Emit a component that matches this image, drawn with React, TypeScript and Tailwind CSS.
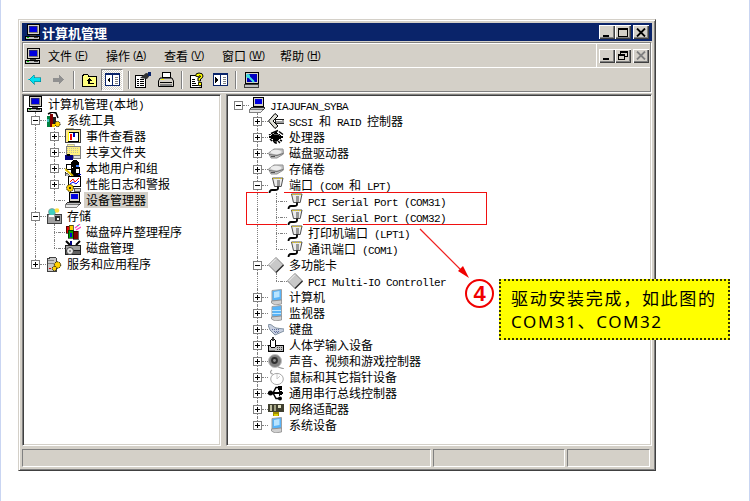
import React from "react";

const S = ({ children, w = 16, h = 16, vb = "0 0 16 16" }: { children: React.ReactNode; w?: number; h?: number; vb?: string }) => (
  <svg width={w} height={h} viewBox={vb} shapeRendering="crispEdges" className="block shrink-0">{children}</svg>
);

const Computer = () => (
  <S>
    <rect x="2" y="0.5" width="12" height="10" fill="#d4d0c8" stroke="#000" />
    <rect x="4" y="2" width="8" height="6" fill="#0000e0" stroke="#404040" strokeWidth="0.6" />
    <rect x="5" y="11" width="6" height="1" fill="#404040" />
    <rect x="0.5" y="12.5" width="14" height="2.5" fill="#c0c0c0" stroke="#000" />
    <rect x="2" y="13" width="2" height="1" fill="#00c000" />
    <rect x="9" y="13" width="4" height="1" fill="#404040" />
  </S>
);
const Tools = () => (
  <S>
    <rect x="1" y="4" width="3" height="11" fill="#008040" />
    <rect x="4" y="2" width="3" height="13" fill="#800000" />
    <rect x="7" y="5" width="3" height="9" fill="#202020" />
    <path d="M2 2 L6 0 L10 1 L12 6" stroke="#000" strokeWidth="1.5" fill="none" shapeRendering="auto" />
    <rect x="1" y="7" width="2" height="3" fill="#40c0c0" />
    <circle cx="11.5" cy="12" r="2.6" fill="#ffd000" stroke="#000" strokeWidth="1" strokeDasharray="1.2 .8" shapeRendering="auto" />
    <rect x="6" y="12" width="3" height="3" fill="#ffd000" />
  </S>
);
const EventV = () => (
  <S>
    <rect x="1" y="0" width="7" height="2" fill="#ffe890" stroke="#808080" strokeWidth=".5" />
    <rect x="0.5" y="1.5" width="15" height="13" fill="#ffe890" stroke="#404040" />
    <rect x="3" y="4" width="10" height="9" fill="#fff" stroke="#000" />
    <rect x="5" y="6" width="2" height="6" fill="#ff0000" />
    <rect x="8" y="5" width="2" height="4" fill="#0000c0" />
    <rect x="3" y="4" width="1" height="9" fill="#ffff00" />
  </S>
);
const Shared = () => (
  <S>
    <rect x="2" y="0" width="7" height="2" fill="#fff8a0" stroke="#808080" strokeWidth=".5" />
    <rect x="1" y="2" width="14" height="9" fill="#fff080" stroke="#808080" />
    <path d="M2 4h12M2 6h12M2 8h12" stroke="#c0c0a0" strokeDasharray="1 1" />
    <rect x="8" y="11" width="7" height="3" fill="#e0e0e0" stroke="#808080" />
    <rect x="0" y="11" width="8" height="5" fill="#000080" />
    <rect x="2" y="10" width="3" height="2" fill="#000" />
  </S>
);
const Users = () => (
  <S>
    <circle cx="10" cy="4" r="4" fill="#000" />
    <path d="M6 8 L15 7 V16 H6 Z" fill="#000" />
    <rect x="11" y="9" width="3" height="4" fill="#fff" />
    <rect x="11" y="5" width="3" height="2" fill="#4080ff" />
    <circle cx="4" cy="7" r="3" fill="#fff" stroke="#000" />
    <path d="M0 9 L8 16" stroke="#e0c000" strokeWidth="2" shapeRendering="auto" />
    <path d="M0 12 L5 16 H0 Z" fill="#c0c0c0" stroke="#000" strokeWidth=".6" />
    <rect x="13" y="14" width="3" height="1" fill="#0000c0" />
  </S>
);
const Perf = () => (
  <S>
    <rect x="3.5" y="0.5" width="12" height="10" fill="#fff" stroke="#000" />
    <path d="M5 6 L8 3 L10 6 L14 2" stroke="#ff0000" fill="none" shapeRendering="auto" />
    <path d="M5 8 L8 6 L11 8 L14 5" stroke="#0000ff" fill="none" shapeRendering="auto" />
    <circle cx="5" cy="12" r="3.4" fill="#ffd000" stroke="#000" strokeDasharray="1.2 .8" shapeRendering="auto" />
    <rect x="9" y="12" width="6" height="3" fill="#d4d0c8" stroke="#000" strokeWidth=".6" />
    <circle cx="5" cy="12" r="1" fill="#000" shapeRendering="auto" />
  </S>
);
const DevMgr = () => (
  <S>
    <rect x="4.5" y="0.5" width="10" height="9" fill="#d4d0c8" stroke="#000" />
    <rect x="6" y="2" width="7" height="5" fill="#0000e0" />
    <path d="M3 10 H15 L15 12 H1 Z" fill="#c0c0c0" stroke="#000" strokeWidth=".8" />
    <path d="M1 12 H14 L12 15 H0 Z" fill="#e8e8e8" stroke="#606060" strokeWidth=".8" />
  </S>
);
const Storage = () => (
  <S>
    <rect x="1" y="6" width="14" height="9" fill="#a0a0a0" stroke="#404040" />
    <rect x="9" y="8" width="5" height="5" fill="#303030" />
    <circle cx="6" cy="4" r="3.5" fill="#40d0c0" stroke="#808080" strokeWidth=".6" shapeRendering="auto" />
    <circle cx="11" cy="2.5" r="2.3" fill="#ffe040" shapeRendering="auto" />
    <rect x="3" y="7" width="5" height="2" fill="#fff" />
    <rect x="11" y="10" width="2" height="2" fill="#fff" />
  </S>
);
const Defrag = () => (
  <S>
    <rect x="1" y="2" width="4" height="7" fill="#e00000" stroke="#000" strokeWidth=".6" />
    <rect x="4" y="1" width="4" height="5" fill="#ffd000" stroke="#000" strokeWidth=".6" />
    <rect x="3" y="6" width="5" height="8" fill="#00a000" stroke="#000" strokeWidth=".6" />
    <rect x="8" y="7" width="5" height="8" fill="#800000" stroke="#000" strokeWidth=".6" />
    <rect x="5" y="9" width="2" height="4" fill="#0000e0" />
    <path d="M10 4 L15 0 M11 6 L16 3" stroke="#ff40c0" strokeWidth="1.2" shapeRendering="auto" />
    <path d="M12 2 L14 1" stroke="#40c0a0" strokeWidth="1.2" />
  </S>
);
const DiskM = () => (
  <S>
    <path d="M1 1 L5 5 M15 1 L11 5" stroke="#000" strokeWidth="2" shapeRendering="auto" />
    <rect x="5" y="1" width="2" height="4" fill="#000080" />
    <rect x="0.5" y="5.5" width="15" height="5" fill="#a0a0a0" stroke="#202020" />
    <rect x="0.5" y="10.5" width="15" height="4" fill="#606060" stroke="#202020" />
    <circle cx="5" cy="11" r="3.5" fill="#e8e8e8" stroke="#404040" shapeRendering="auto" />
    <circle cx="5" cy="11" r="1" fill="#808080" shapeRendering="auto" />
  </S>
);
const Services = () => (
  <S>
    <path d="M1 3 L6 1 L10 2 V15 H1 Z" fill="#c8c8c8" stroke="#404040" />
    <rect x="2" y="4" width="6" height="1" fill="#808080" />
    <rect x="2" y="7" width="6" height="1" fill="#808080" />
    <rect x="3" y="12" width="2" height="1" fill="#e00000" />
    <circle cx="11.5" cy="9" r="3.2" fill="#ffd000" stroke="#000" strokeDasharray="1.2 .8" shapeRendering="auto" />
    <circle cx="8.5" cy="12.5" r="2.2" fill="#ffd000" stroke="#000" strokeDasharray="1 .7" shapeRendering="auto" />
  </S>
);
const Scsi = () => (
  <S>
    <path d="M7 0.5 L0.5 8 L7 15.5 L10 13 L5 8 L10 3 Z" fill="#e0e0d8" stroke="#000" shapeRendering="auto" />
    <rect x="7" y="6" width="9" height="4" fill="#a0a0a0" stroke="#000" strokeWidth=".8" />
    <rect x="8" y="7" width="6" height="1" fill="#fff" />
  </S>
);
const Chip = () => (
  <S>
    <path d="M0.5 8 L8 3 L15.5 8 L8 12.5 Z" fill="#000" />
    <path d="M3 4.5 L10 1.5 M1 6 L5 3.5 M11 2.5 L15 5.5 M2 10 L4 12 M5 11 L7 14 M8 12 V15 M10 12 L12 14 M12 11 L14 12" stroke="#000" strokeWidth="1.4" shapeRendering="auto" />
    <path d="M6 6 L10 5 L12 7" stroke="#606060" fill="none" />
  </S>
);
const Disk = () => (
  <S>
    <path d="M0.5 8 L6 4 H15 L15.5 9 L9 13 H3 Z" fill="#c4c4c4" stroke="#909090" shapeRendering="auto" />
    <ellipse cx="8" cy="7" rx="5.5" ry="2.2" fill="#ececec" shapeRendering="auto" />
    <path d="M1 9.5 L9 10.5 L15 8.5" stroke="#707070" fill="none" shapeRendering="auto" />
    <rect x="3" y="11" width="4" height="1" fill="#505050" />
  </S>
);
const Port = () => (
  <S>
    <path d="M4.5 1 H15 L13.2 9.5 H6.5 Z" fill="#ececec" stroke="#505050" shapeRendering="auto" />
    <path d="M5 1 H15" stroke="#e8c800" strokeDasharray="1 1" />
    <rect x="9" y="3" width="3" height="6" fill="#989898" />
    <path d="M10 9.5 V11.5 Q10 13 7 13 H4 Q1.5 13 1.5 16" stroke="#000" strokeWidth="1.8" fill="none" shapeRendering="auto" />
  </S>
);
const Diamond = () => (
  <S>
    <path d="M8 0.5 L15.5 8 L8 15.5 L0.5 8 Z" fill="#c8c8c8" stroke="#808080" shapeRendering="auto" />
    <path d="M8 15.5 L15.5 8" stroke="#303030" strokeWidth="1.4" shapeRendering="auto" />
    <path d="M8 1.5 L1.5 8" stroke="#fff" shapeRendering="auto" />
  </S>
);
const PcBlue = () => (
  <S>
    <path d="M4 1.5 L13.5 0.5 V11 L4 12 Z" fill="#58b4f8" stroke="#a0a0a0" shapeRendering="auto" />
    <path d="M6 3 L11.5 2 V8 L6 9 Z" fill="#b8e4ff" shapeRendering="auto" />
    <path d="M3.5 12 L13.5 11 V15 L7 16 L3.5 14 Z" fill="#d0d0d0" stroke="#808080" strokeWidth=".7" shapeRendering="auto" />
  </S>
);
const Mon = () => (
  <S>
    <path d="M4 1.5 L13.5 0.5 V11 L4 12 Z" fill="#58b4f8" stroke="#a0a0a0" shapeRendering="auto" />
    <path d="M4 5 H13 M4 8 H13" stroke="#c0e8ff" />
    <path d="M3.5 12 L13.5 11 V15 L7 16 L3.5 14 Z" fill="#d0d0d0" stroke="#808080" strokeWidth=".7" shapeRendering="auto" />
  </S>
);
const Keyboard = () => (
  <S>
    <path d="M0 4 C3 2 5 6 8 7 L16 8 V10 L7 14 L2 9 Z" fill="#c8d0e0" stroke="#8090a0" shapeRendering="auto" />
    <path d="M4 8 L12 9 M6 10 L12 10 M7 12 L11 11" stroke="#6070a0" strokeDasharray="1 1" />
  </S>
);
const Hid = () => (
  <S>
    <rect x="0.5" y="8.5" width="15" height="6" fill="#c0c0c0" stroke="#000" />
    <path d="M9 10h5M9 12h5" stroke="#404040" strokeDasharray="1 1" />
    <rect x="2.5" y="2.5" width="5" height="8" rx="2" fill="#fff" stroke="#000" />
    <rect x="4" y="0" width="2" height="4" fill="#404040" />
    <rect x="1" y="13" width="6" height="1" fill="#808080" />
  </S>
);
const Speaker = () => (
  <S>
    <circle cx="7" cy="8" r="6.5" fill="#808080" stroke="#c0c0c0" shapeRendering="auto" />
    <circle cx="6.5" cy="7.5" r="3.4" fill="#303030" shapeRendering="auto" />
    <circle cx="6.5" cy="7.5" r="1.4" fill="#909090" shapeRendering="auto" />
    <path d="M10 14 L16 16" stroke="#a0a0a0" strokeWidth="1.2" shapeRendering="auto" />
  </S>
);
const Mouse = () => (
  <S>
    <ellipse cx="9" cy="10" rx="6.3" ry="5.6" fill="#fff" stroke="#a8a8a8" shapeRendering="auto" />
    <path d="M4 1 C1 3 3 5 5 5" stroke="#a0a0a0" fill="none" strokeWidth="1.2" shapeRendering="auto" />
    <path d="M9 5 V10 L12 7" stroke="#c8c8c8" fill="none" shapeRendering="auto" />
  </S>
);
const Usb = () => (
  <S>
    <path d="M0 8 H14" stroke="#000" strokeWidth="2" />
    <path d="M11 4.5 L16 8 L11 11.5 Z" fill="#000" />
    <circle cx="2.5" cy="8" r="2.5" fill="#000" shapeRendering="auto" />
    <path d="M5 8 L8 2.5 H11 M5 8 L8 13.5 H11" stroke="#000" strokeWidth="1.5" fill="none" shapeRendering="auto" />
    <rect x="10" y="0.5" width="4" height="4" fill="#000" />
    <circle cx="12" cy="13.5" r="2" fill="#000" shapeRendering="auto" />
  </S>
);
const Nic = () => (
  <S>
    <rect x="0" y="3" width="16" height="8" fill="#404030" />
    <rect x="2" y="4" width="2" height="6" fill="#c0c0a0" />
    <rect x="6" y="4" width="2" height="6" fill="#a0a080" />
    <rect x="10" y="4" width="3" height="3" fill="#e0e0c0" />
    <rect x="5" y="11" width="6" height="4" fill="#a09000" />
    <rect x="6" y="13" width="4" height="2" fill="#e0d000" />
  </S>
);

const Back = ({ c }: { c: string }) => (
  <S w={13} h={11} vb="0 0 13 11"><path d="M0.5 5.5 L6 0.5 V3.5 H12.5 V7.5 H6 V10.5 Z" fill={c} stroke={c === "#00e0f0" ? "#008090" : "#909090"} strokeWidth=".6" /></S>
);
const Fwd = () => (
  <S w={13} h={11} vb="0 0 13 11"><path d="M12.5 5.5 L7 0.5 V3.5 H0.5 V7.5 H7 V10.5 Z" fill="#909090" /></S>
);
const Sep = () => <div className="w-[2px] h-[18px] ml-[7px] border-l border-l-[#808080] border-r border-r-white shrink-0" />;
const Folder = () => (
  <S w={15} h={14} vb="0 0 15 14">
    <path d="M0.5 3.5 V13.5 H14.5 V3.5 H7 L5.5 1 H2 L0.5 3.5 Z" fill="#ffff80" stroke="#000" />
    <path d="M7 5 L4 8 H6 V11 H12 V10 H8 V8 H10 Z" fill="#000" />
  </S>
);
const Pane = ({ flip }: { flip?: boolean }) => (
  <S w={15} h={13} vb="0 0 15 13">
    <rect x="0.5" y="0.5" width="14" height="12" fill="#fff" stroke="#0a246a" />
    <rect x="0" y="0" width="15" height="2" fill="#0a246a" />
    <rect x="7" y="0" width="1" height="13" fill="#0a246a" />
    {flip ? <path d="M5 4 V10 L2 7 Z" fill="#000" transform="matrix(-1 0 0 1 7 0)" /> : <path d="M5 4 V10 L2 7 Z" fill="#000" />}
    <path d="M10 4h3M10 6h3M10 8h3M10 10h3" stroke="#808080" />
  </S>
);
const Props = () => (
  <S>
    <path d="M0.5 3.5 H10.5 V15.5 H0.5 Z" fill="#fff" stroke="#000" />
    <path d="M2 7h2M5 7h4M2 9h2M5 9h4M2 11h2M5 11h4M2 13h2M5 13h4" stroke="#000" />
    <path d="M5 6 L11 1 L16 2 L12 7 Z" fill="#303030" shapeRendering="auto" />
    <rect x="13" y="0" width="3" height="4" fill="#0a246a" />
  </S>
);
const Printer = () => (
  <S>
    <path d="M4.5 0.5 H12.5 V5.5 H4.5 Z" fill="#fff" stroke="#000" />
    <path d="M2 6 H14 L15.5 9 V14.5 H0.5 V9 Z" fill="#d4d0c8" stroke="#000" shapeRendering="auto" />
    <rect x="2" y="10" width="12" height="1" fill="#000" />
    <rect x="2" y="12" width="12" height="2" fill="#808080" />
    <rect x="3" y="7" width="3" height="1" fill="#ffff00" />
  </S>
);
const Help = () => (
  <S w={14} h={16} vb="0 0 14 16">
    <path d="M0.5 3.5 H5 V15.5 H11.5 V12 V15.5 H0.5 Z" fill="#fff" stroke="#000" />
    <rect x="1" y="4" width="8" height="11" fill="#fff" />
    <path d="M2 7h3M2 9h3M2 11h4M2 13h6" stroke="#000" />
    <path d="M5.5 4 Q5.5 1 9 1 Q13 1 13 4 Q13 6 10.5 7 V9 H8 V6 Q10.5 5.5 10.5 4 Q9 3 8.5 5 Z" fill="#ffff00" stroke="#000" shapeRendering="auto" />
    <rect x="8" y="10" width="3" height="3" fill="#ffff00" stroke="#000" strokeWidth=".8" />
  </S>
);
const Mmc = () => (
  <S w={15} h={16} vb="0 0 15 16">
    <rect x="1.5" y="0.5" width="13" height="11" fill="#d4d0c8" stroke="#000" />
    <rect x="3" y="2" width="10" height="8" fill="#0000c0" />
    <path d="M3 3 L10 10" stroke="#40e0e0" strokeWidth="2" shapeRendering="auto" />
    <circle cx="4" cy="4" r="2" fill="#40e0e0" shapeRendering="auto" />
    <rect x="0.5" y="12.5" width="14" height="3" fill="#c0c0c0" stroke="#404040" />
  </S>
);

const WinBtn = ({ children, className = "" }: { children: React.ReactNode; className?: string }) => (
  <div className={`w-[16px] h-[14px] bg-[#d4d0c8] shadow-[inset_1px_1px_0_#fff,inset_-1px_-1px_0_#404040,inset_-2px_-2px_0_#808080] flex items-center justify-center shrink-0 ${className}`}>
    {children}
  </div>
);
const GMin = () => (
  <S w={10} h={9} vb="0 0 10 9"><rect x="1" y="7" width="6" height="2" fill="#000" /></S>
);
const GMax = () => (
  <S w={10} h={9} vb="0 0 10 9"><rect x="0.5" y="0.5" width="9" height="8" fill="none" stroke="#000" /><rect x="0" y="0" width="10" height="2" fill="#000" /></S>
);
const GClose = ({ c = "#000" }: { c?: string }) => (
  <svg width={10} height={9} viewBox="0 0 10 9" className="block"><path d="M1 0.5 L9 8.5 M9 0.5 L1 8.5" stroke={c} strokeWidth="1.8" /></svg>
);
const GRestore = () => (
  <S w={10} h={9} vb="0 0 10 9">
    <rect x="2.5" y="0.5" width="7" height="5" fill="none" stroke="#000" />
    <rect x="2" y="0" width="8" height="2" fill="#000" />
    <rect x="0.5" y="3.5" width="6" height="5" fill="#d4d0c8" stroke="#000" />
    <rect x="0" y="3" width="7" height="2" fill="#000" />
  </S>
);

const Label = ({ text }: { text: string }) => (
  <>
    {text.split(/([\x20-\x7e]+)/).filter(Boolean).map((p, i) =>
      /^[\x20-\x7e]+$/.test(p) ? (
        <span key={i} className="font-['Liberation_Mono',monospace] text-[11px] tracking-[-0.6px] whitespace-pre">{p}</span>
      ) : (
        <span key={i}>{p}</span>
      )
    )}
  </>
);

const Box = ({ open }: { open?: boolean }) => (
  <div className="relative z-10 w-[9px] h-[9px] border border-[#808080] bg-white shrink-0 flex items-center justify-center">
    <svg width="7" height="7" viewBox="0 0 7 7" shapeRendering="crispEdges" className="block">
      <rect x="1" y="3" width="5" height="1" fill="#000" />
      {!open && <rect x="3" y="1" width="1" height="5" fill="#000" />}
    </svg>
  </div>
);

const V = ({ c }: { c: string }) => <div className={`absolute border-l border-dotted border-[#808080] ${c}`} />;

type RowP = {
  indent?: string;
  box?: "open" | "closed" | "none" | "root";
  icon: React.ReactNode;
  text: string;
  guides?: string[];
  selected?: boolean;
};

const Row = ({ indent = "", box = "none", icon, text, guides = [], selected }: RowP) => (
  <div className={`relative h-4 flex items-center whitespace-nowrap ${indent}`}>
    {guides.map((g, i) => <V key={i} c={g} />)}
    {box !== "root" && (
      <>
        {box === "none" ? (
          <div className="w-[9px] flex justify-end shrink-0"><div className="w-[5px] border-t border-dotted border-[#808080]" /></div>
        ) : (
          <Box open={box === "open"} />
        )}
        <div className="w-[6px] border-t border-dotted border-[#808080] shrink-0" />
      </>
    )}
    <div className="relative z-10 bg-white shrink-0">{icon}</div>
    <div className={`ml-[3px] px-[2px] h-4 leading-[15px] ${selected ? "bg-[#d4d0c8]" : ""}`}><Label text={text} /></div>
  </div>
);

const L1 = "left-[11px] top-0 h-4";
const L1e = "left-[11px] top-0 h-2";
const L2 = "left-[30px] top-0 h-4";
const L2e = "left-[30px] top-0 h-2";
const L2s = "left-[30px] top-2 h-2";

const R1 = "left-[29px] top-0 h-4";
const R1e = "left-[29px] top-0 h-2";
const R2 = "left-[48px] top-0 h-4";
const R2e = "left-[48px] top-0 h-2";
const R2s = "left-[48px] top-2 h-2";

const Sunken = ({ className, children }: { className: string; children: React.ReactNode }) => (
  <div className={`bg-white border-t border-l border-t-[#808080] border-l-[#808080] border-b border-r border-b-white border-r-white shadow-[inset_1px_1px_0_#404040,inset_-1px_-1px_0_#d4d0c8] overflow-hidden ${className}`}>
    {children}
  </div>
);

const Menu = ({ a, k, b = ")" }: { a: string; k: string; b?: string }) => (
  <div className="w-[58px] shrink-0 whitespace-nowrap text-[12px] flex items-center">
    <span>{a}</span>
    <span className="ml-[3px] font-['Liberation_Sans',sans-serif] text-[10px]">(<span className="underline">{k}</span>{b}</span>
  </div>
);

const Status = ({ className }: { className: string }) => (
  <div className={`h-[18px] border-t border-l border-t-[#808080] border-l-[#808080] border-b border-r border-b-white border-r-white ${className}`} />
);

export default function App() {
  return (
    <div className="relative w-[750px] h-[501px] bg-white border-x border-x-[#c9d5f2] pl-[17px] pt-[19px] overflow-hidden text-black text-[12px] font-['Noto_Sans_CJK_SC','Liberation_Sans',sans-serif]">
      {/* window */}
      <div className="w-[638px] h-[452px] bg-[#d4d0c8] border border-t-[#d4d0c8] border-l-[#d4d0c8] border-r-[#404040] border-b-[#404040] shadow-[inset_1px_1px_0_#fff,inset_-1px_-1px_0_#808080] p-[3px] flex flex-col">
        {/* title */}
        <div className="h-[18px] bg-[#0a246a] flex items-center pl-[3px] pr-[3px] shrink-0">
          <Computer />
          <span className="ml-px text-white font-bold text-[13px] leading-[17px]">计算机管理</span>
          <div className="ml-auto flex items-center">
            <WinBtn><GMin /></WinBtn>
            <WinBtn><GMax /></WinBtn>
            <WinBtn className="ml-[2px]"><GClose /></WinBtn>
          </div>
        </div>
        {/* rebar */}
        <div className="mt-px mr-px h-[50px] shrink-0 border border-[#808080] shadow-[inset_1px_1px_0_#fff,1px_1px_0_#fff] flex flex-col">
          <div className="h-[24px] flex items-center border-b border-b-white shrink-0 mt-px">
            <div className="ml-[2px]"><Computer /></div>
            <div className="ml-[7px] flex items-center w-[547px]">
              <Menu a="文件" k="F" />
              <Menu a="操作" k="A" />
              <Menu a="查看" k="V" />
              <Menu a="窗口" k="W" />
              <Menu a="帮助" k="H" />
            </div>
            <div className="self-stretch border-l border-l-white ml-[1px]" />
            <div className="ml-[2px] flex items-center">
              <WinBtn><GMin /></WinBtn>
              <WinBtn><GRestore /></WinBtn>
              <WinBtn className="ml-[2px]"><GClose c="#808080" /></WinBtn>
            </div>
          </div>
          <div className="flex-1 flex items-center">
            <div className="ml-[5px]"><Back c="#00e0f0" /></div>
            <div className="ml-[11px]"><Fwd /></div>
            <div className="ml-[1px]"><Sep /></div>
            <div className="ml-[7px]"><Folder /></div>
            <div className="ml-[4px] w-[22px] h-[22px] border-t border-l border-t-[#808080] border-l-[#808080] border-b border-r border-b-white border-r-white flex items-center justify-center bg-[repeating-conic-gradient(#ffffff_0_25%,#d4d0c8_0_50%)] bg-size-[2px_2px] shrink-0">
              <Pane />
            </div>
            <div className="-ml-[2px]"><Sep /></div>
            <div className="ml-[5px]"><Props /></div>
            <div className="ml-[7px]"><Printer /></div>
            <Sep />
            <div className="ml-[7px]"><Help /></div>
            <div className="ml-[9px]"><Pane flip /></div>
            <Sep />
            <div className="ml-[7px]"><Mmc /></div>
          </div>
        </div>
        {/* panes */}
        <div className="mt-[2px] h-[352px] flex gap-[5px] shrink-0">
          <Sunken className="w-[199px] p-px">
            <div>
              <Row box="root" indent="pl-[3px]" icon={<Computer />} text="计算机管理(本地)" guides={["left-[11px] top-2 h-2"]} />
              <Row indent="pl-[7px]" box="open" icon={<Tools />} text="系统工具" guides={[L1, L2s]} />
              <Row indent="pl-[26px]" box="closed" icon={<EventV />} text="事件查看器" guides={[L1, L2]} />
              <Row indent="pl-[26px]" box="closed" icon={<Shared />} text="共享文件夹" guides={[L1, L2]} />
              <Row indent="pl-[26px]" box="closed" icon={<Users />} text="本地用户和组" guides={[L1, L2]} />
              <Row indent="pl-[26px]" box="closed" icon={<Perf />} text="性能日志和警报" guides={[L1, L2]} />
              <Row indent="pl-[26px]" icon={<DevMgr />} text="设备管理器" guides={[L1, L2e]} selected />
              <Row indent="pl-[7px]" box="open" icon={<Storage />} text="存储" guides={[L1, L2s]} />
              <Row indent="pl-[26px]" icon={<Defrag />} text="磁盘碎片整理程序" guides={[L1, L2]} />
              <Row indent="pl-[26px]" icon={<DiskM />} text="磁盘管理" guides={[L1, L2e]} />
              <Row indent="pl-[7px]" box="closed" icon={<Services />} text="服务和应用程序" guides={[L1e]} />
            </div>
          </Sunken>
          <Sunken className="w-[426px] p-px">
            <div className="mt-px">
              <Row indent="pl-[6px]" box="open" icon={<DevMgr />} text="JIAJUFAN_SYBA" guides={["left-[29px] top-2 h-2"]} />
              <Row indent="pl-[25px]" box="closed" icon={<Scsi />} text="SCSI 和 RAID 控制器" guides={[R1]} />
              <Row indent="pl-[25px]" box="closed" icon={<Chip />} text="处理器" guides={[R1]} />
              <Row indent="pl-[25px]" box="closed" icon={<Disk />} text="磁盘驱动器" guides={[R1]} />
              <Row indent="pl-[25px]" box="closed" icon={<Disk />} text="存储卷" guides={[R1]} />
              <Row indent="pl-[25px]" box="open" icon={<Port />} text="端口 (COM 和 LPT)" guides={[R1, R2s]} />
              <Row indent="pl-[44px]" icon={<Port />} text="PCI Serial Port (COM31)" guides={[R1, R2]} />
              <Row indent="pl-[44px]" icon={<Port />} text="PCI Serial Port (COM32)" guides={[R1, R2]} />
              <Row indent="pl-[44px]" icon={<Port />} text="打印机端口 (LPT1)" guides={[R1, R2]} />
              <Row indent="pl-[44px]" icon={<Port />} text="通讯端口 (COM1)" guides={[R1, R2e]} />
              <Row indent="pl-[25px]" box="open" icon={<Diamond />} text="多功能卡" guides={[R1, R2s]} />
              <Row indent="pl-[44px]" icon={<Diamond />} text="PCI Multi-IO Controller" guides={[R1, R2e]} />
              <Row indent="pl-[25px]" box="closed" icon={<PcBlue />} text="计算机" guides={[R1]} />
              <Row indent="pl-[25px]" box="closed" icon={<Mon />} text="监视器" guides={[R1]} />
              <Row indent="pl-[25px]" box="closed" icon={<Keyboard />} text="键盘" guides={[R1]} />
              <Row indent="pl-[25px]" box="closed" icon={<Hid />} text="人体学输入设备" guides={[R1]} />
              <Row indent="pl-[25px]" box="closed" icon={<Speaker />} text="声音、视频和游戏控制器" guides={[R1]} />
              <Row indent="pl-[25px]" box="closed" icon={<Mouse />} text="鼠标和其它指针设备" guides={[R1]} />
              <Row indent="pl-[25px]" box="closed" icon={<Usb />} text="通用串行总线控制器" guides={[R1]} />
              <Row indent="pl-[25px]" box="closed" icon={<Nic />} text="网络适配器" guides={[R1]} />
              <Row indent="pl-[25px]" box="closed" icon={<PcBlue />} text="系统设备" guides={[R1e]} />
            </div>
          </Sunken>
        </div>
        {/* status */}
        <div className="mt-[3px] flex gap-[2px] shrink-0">
          <Status className="w-[409px]" />
          <Status className="w-[132px]" />
          <Status className="w-[83px]" />
        </div>
      </div>

      {/* annotations lying over the screenshot */}
      <div className="absolute left-[245px] top-[192px] w-[241px] h-[33px] border border-[#f01010]" />
      <svg className="absolute left-[400px] top-[210px]" width="90" height="80" viewBox="400 210 90 80">
        <path d="M419 229 L463 273" stroke="#f02020" strokeWidth="1.2" fill="none" />
        <path d="M468 278 L457 271 L462 266 Z" fill="#f00000" />
      </svg>
      <div className="absolute left-[464px] top-[279px] w-[29px] h-[29px] rounded-full border-2 border-[#f00000] bg-white flex items-center justify-center text-[#f00000] font-bold text-[22px] leading-none font-['Liberation_Sans',sans-serif]">4</div>
      <div className="absolute left-[498px] top-[279px] w-[231px] h-[61px] bg-[#ffff00] border-2 border-dotted border-[#333300] pl-[10px] pt-[5px] text-[17px] leading-[24px] tracking-[1.7px] text-black whitespace-nowrap">
        <div>驱动安装完成，如此图的</div>
        <div className="font-['Noto_Sans','Noto_Sans_CJK_SC',sans-serif] tracking-[1.6px]">COM31、COM32</div>
      </div>
    </div>
  );
}
